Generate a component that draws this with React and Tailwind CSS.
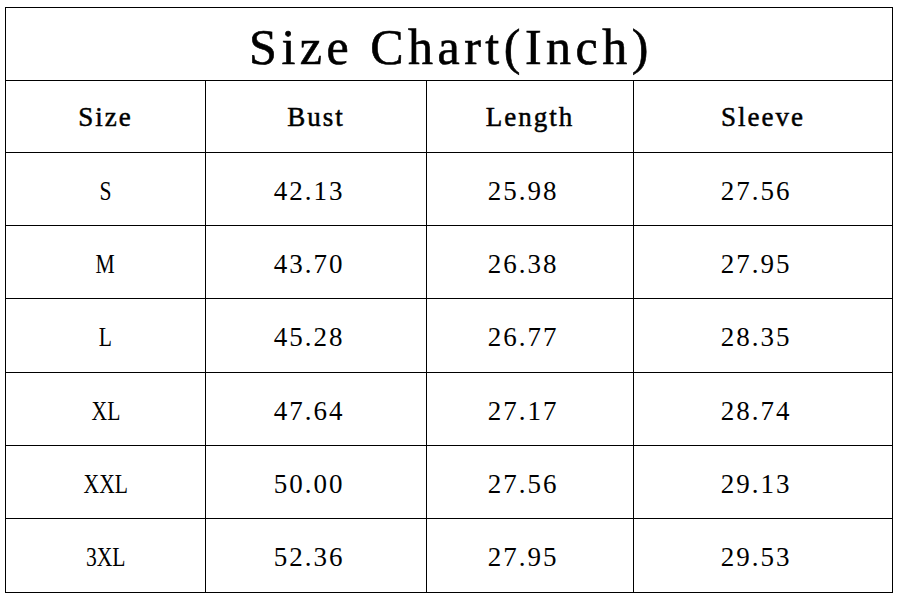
const rows = [
  { size: 'S', bust: '42.13', length: '25.98', sleeve: '27.56', h: 'h-[73px]' },
  { size: 'M', bust: '43.70', length: '26.38', sleeve: '27.95', h: 'h-[73px]' },
  { size: 'L', bust: '45.28', length: '26.77', sleeve: '28.35', h: 'h-[74px]' },
  { size: 'XL', bust: '47.64', length: '27.17', sleeve: '28.74', h: 'h-[73px]' },
  { size: 'XXL', bust: '50.00', length: '27.56', sleeve: '29.13', h: 'h-[73px]' },
  { size: '3XL', bust: '52.36', length: '27.95', sleeve: '29.53', h: 'h-[74px]' },
];

export default function App() {
  return (
    <div className="w-[897px] h-[597px] bg-white pt-[7px] pl-[5px] font-['Liberation_Serif',serif] text-black">
      <table className="table-fixed border-collapse w-[887px]">
        <colgroup>
          <col className="w-[200px]" />
          <col className="w-[221px]" />
          <col className="w-[207px]" />
          <col className="w-[259px]" />
        </colgroup>
        <tbody>
          {/* Title */}
          <tr className="h-[73px]">
            <td colSpan={4} className="border border-black p-0 pt-[6px] pl-[4px] text-center text-[50px] leading-none tracking-[4.5px] [-webkit-text-stroke:0.6px_black]">
              Size Chart(Inch)
            </td>
          </tr>

          {/* Column headers */}
          <tr className="h-[72px] text-[27px] tracking-[2px] [-webkit-text-stroke:0.5px_black]">
            <td className="border border-black p-0 pt-[2px] text-center">Size</td>
            <td className="border border-black p-0 pt-[2px] text-center">Bust</td>
            <td className="border border-black p-0 pt-[2px] text-center">Length</td>
            <td className="border border-black p-0 pt-[2px] text-center">Sleeve</td>
          </tr>

          {rows.map((r) => (
            <tr key={r.size} className={`${r.h} text-[27px] tracking-[2px]`}>
              <td className="border border-black p-0 pt-[4px] text-center">
                <span className="inline-block scale-x-[0.8] tracking-[0px]">{r.size}</span>
              </td>
              <td className="border border-black p-0 pt-[4px] pr-[14px] text-center">{r.bust}</td>
              <td className="border border-black p-0 pt-[4px] pr-[14px] text-center">{r.length}</td>
              <td className="border border-black p-0 pt-[4px] pr-[14px] text-center">{r.sleeve}</td>
            </tr>
          ))}
        </tbody>
      </table>
    </div>
  );
}
